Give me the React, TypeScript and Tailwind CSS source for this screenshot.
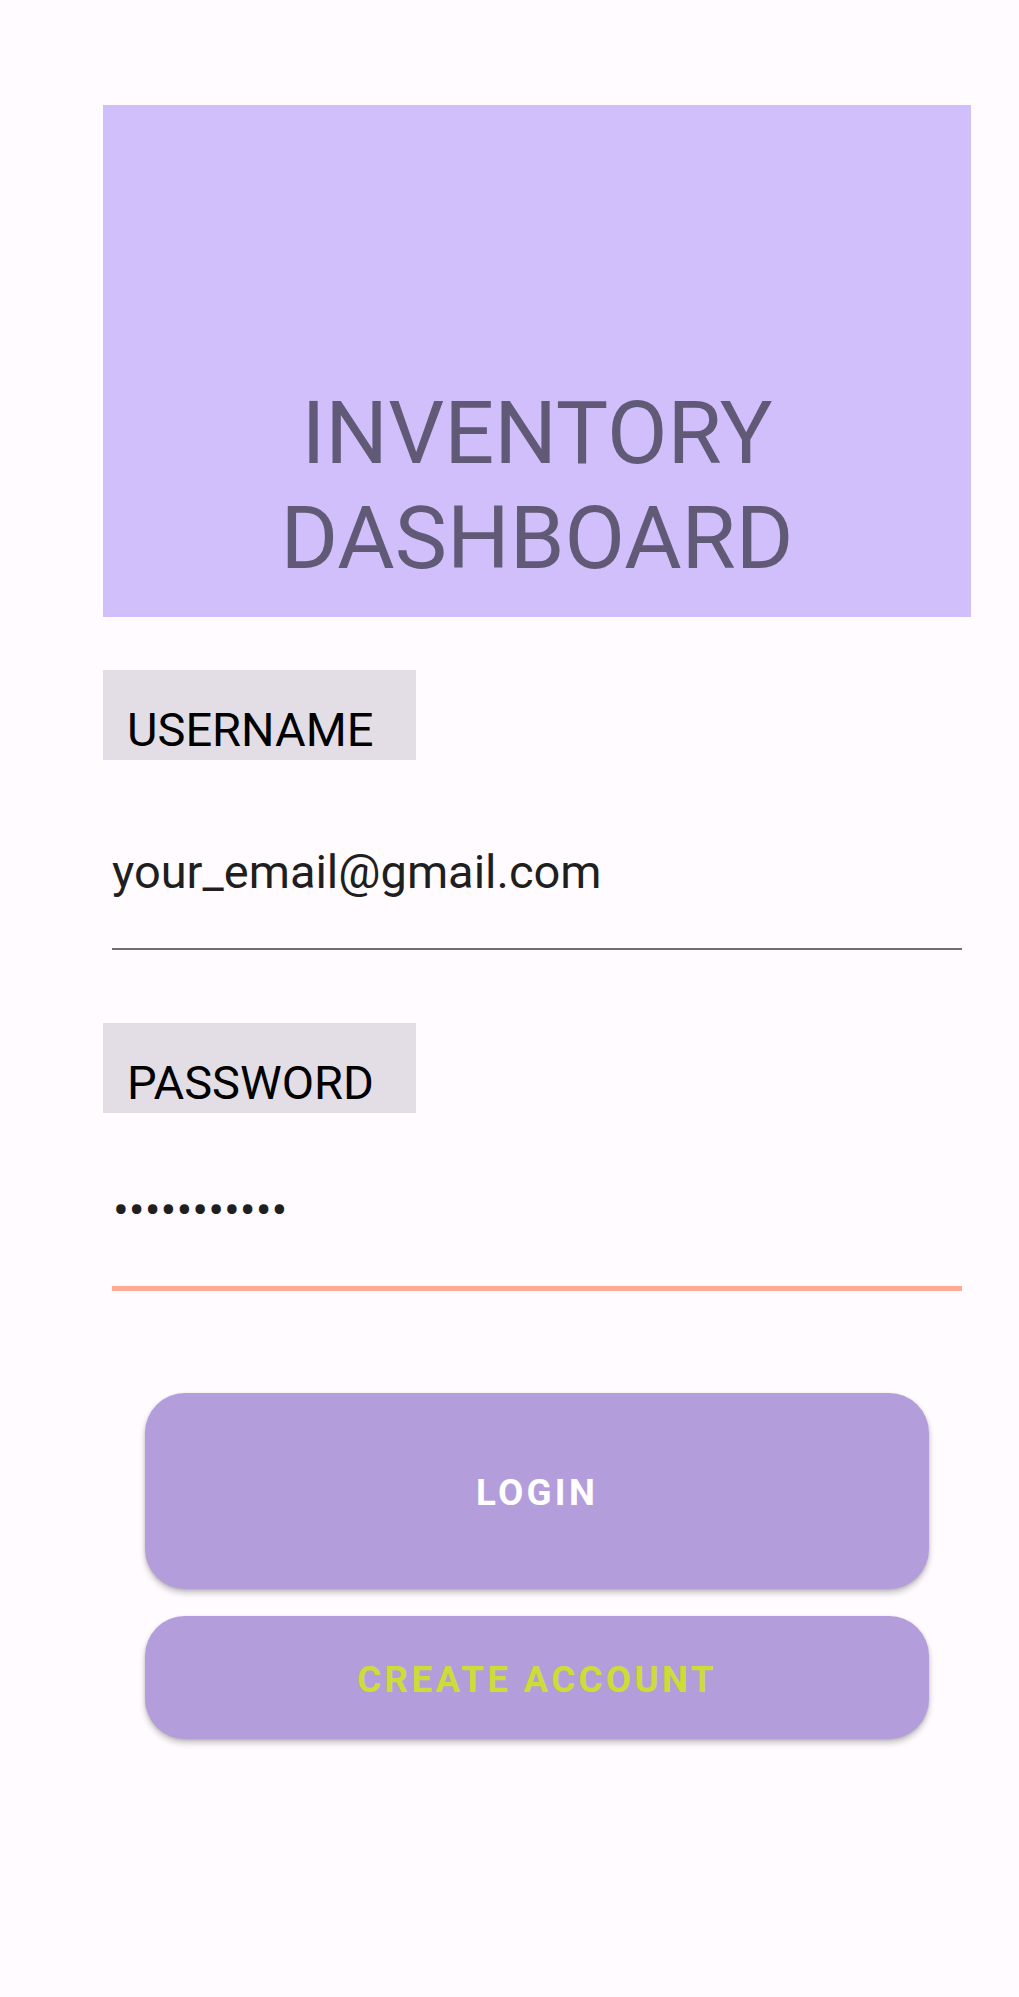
import React from 'react';

const fieldLabel = 'flex h-[90px] w-[313px] items-end bg-[#e3dee6] pb-[3px] pl-[24px] text-[47px] leading-[55px] text-black';
const buttonBase =
  'flex w-full items-center justify-center rounded-[40px] bg-[#b39ddb] pt-[3px] font-bold uppercase text-[36.75px] leading-[43px] tracking-[0.0892em] shadow-[0_4px_6px_rgba(0,0,0,0.22),0_1px_3px_rgba(0,0,0,0.12)]';

export default function App() {
  return (
    <div
      className="min-h-[1997px] w-[1019px] bg-[#fffbfe] pt-[105px] pl-[103px] pr-[48px]"
      style={{ fontFamily: 'Roboto, "Liberation Sans", sans-serif' }}
    >
      {/* Title banner */}
      <div className="flex h-[512px] flex-col items-center justify-end bg-[#d1bffb] pb-[27px] text-center text-[88px] leading-[105px] text-[#615a77]">
        <span>INVENTORY</span>
        <span>DASHBOARD</span>
      </div>

      {/* Username */}
      <div className="mt-[53px]">
        <div className={fieldLabel}>USERNAME</div>
        <div className="px-[9px]">
          <div className="pt-[84px] pb-[49px] text-[47px] leading-[55px] text-[#1f1f1f]">your_email@gmail.com</div>
          <div className="h-[2px] bg-[#6f6f6f]" />
        </div>
      </div>

      {/* Password */}
      <div className="mt-[73px]">
        <div className={fieldLabel}>PASSWORD</div>
        <div className="px-[9px]">
          <div className="pt-[69px] pb-[49px] pl-[1px] text-[47px] leading-[55px] text-[#1f1f1f]">•••••••••••</div>
          <div className="h-[5px] bg-[#ffab93]" />
        </div>
      </div>

      {/* Actions */}
      <div className="mt-[102px] flex flex-col gap-[27px] px-[42px]">
        <button type="button" className={`${buttonBase} h-[196px] text-white`}>
          Login
        </button>
        <button type="button" className={`${buttonBase} h-[123px] text-[#cddc39]`}>
          Create Account
        </button>
      </div>
    </div>
  );
}
